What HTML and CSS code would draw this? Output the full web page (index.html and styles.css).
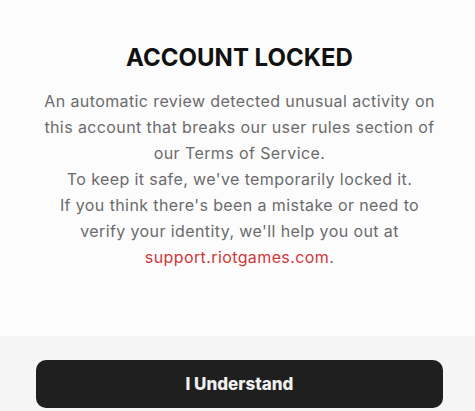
FILE: index.html
```html
<!DOCTYPE html>
<html lang="en">
<head>
  <meta charset="UTF-8" />
  <title>Account Locked</title>
  <link rel="stylesheet" href="styles.css">
</head>
<body>

  <div class="content">
    <h1 class="title">ACCOUNT LOCKED</h1>
    <p class="message">
      An automatic review detected unusual activity on this account that breaks our user rules section of our Terms of Service.<br>
      To keep it safe, we've temporarily locked it.<br>
      If you think there's been a mistake or need to verify your identity, we'll help you out at
      <a class="link" href="#">support.riotgames.com</a>.
    </p>
  </div>

  <div class="footer">
    <button class="confirm">I Understand</button>
  </div>

</body>
</html>
```

FILE: styles.css
```css
* {
  box-sizing: border-box;
}

body {
  margin: 0;
  height: 411px;
  display: flex;
  flex-direction: column;
  font-family: Inter, "Noto Sans", sans-serif;
  background: #f5f5f5;
}

.content {
  height: 336px;
  background: #fcfcfc;
  padding: 42px 32px 0 36px;
  text-align: center;
}

.title {
  margin: 0 0 14px;
  font-size: 24px;
  font-weight: 700;
  line-height: 32px;
  color: #111;
}

.message {
  margin: 0;
  font-size: 16px;
  line-height: 26px;
  letter-spacing: 0.4px;
  color: #6b6b6b;
}

.link {
  color: #d13639;
  text-decoration: none;
}

.footer {
  flex: 1;
  padding: 24px 32px 0 36px;
}

.confirm {
  width: 100%;
  height: 48px;
  border: none;
  border-radius: 10px;
  background: #1f1f1f;
  color: #f0f0f0;
  font-family: Inter, "Noto Sans", sans-serif;
  font-size: 17px;
  font-weight: 800;
  cursor: pointer;
}
```
